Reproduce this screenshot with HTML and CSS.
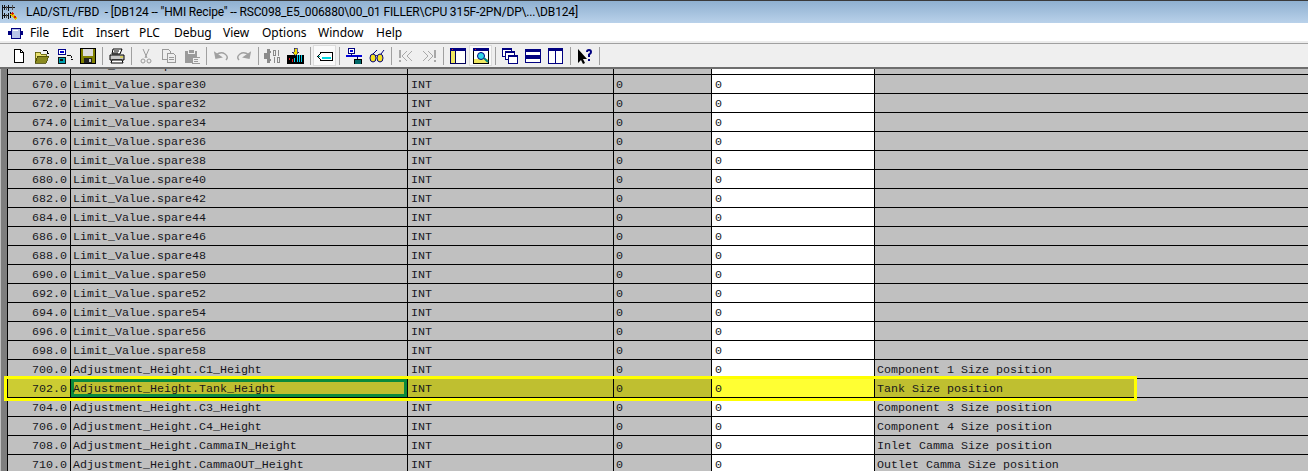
FILE: index.html
```html
<!DOCTYPE html>
<html lang="en">
<head>
<meta charset="utf-8">
<title>LAD/STL/FBD</title>
<link rel="stylesheet" href="styles.css">
</head>
<body>
<div class="app">
  <header class="titlebar">
    <svg class="logo" width="16" height="16" viewBox="0 0 16 16" shape-rendering="crispEdges">
      <path d="M0 1h1v14H0zM6 1h1v6H6zM6 9h1v6H6zM0 3h6v1H0zM0 11h6v1H0zM7 3h6v1H7zM2 1h1v5H2zM2 9h1v5H2zM8 8h1v6H8z" fill="#111"/>
      <path d="M4 2h1v4H4zM4 10h1v4H4zM10 1h1v5h-1z" fill="#555"/>
      <path d="M10 8l5 6-2 2-5-6z" fill="#e8c000"/>
      <path d="M9 9l2-1 1 2-2 1z" fill="#d02010"/>
      <path d="M12 12h2v2h-2z" fill="#d02010"/>
    </svg>
    <span class="title-text">LAD/STL/FBD&nbsp; - [DB124 -- "HMI Recipe" -- RSC098_E5_006880\00_01 FILLER\CPU 315F-2PN/DP\...\DB124]</span>
  </header>
  <nav class="menubar">
    <svg class="doc-icon" width="15" height="12" viewBox="0 0 15 12" shape-rendering="crispEdges">
      <path d="M3 1h9v10H3z" fill="#b8c4e8" stroke="#000080"/>
      <path d="M0 4h3v4H0zM12 4h3v4h-3z" fill="#000080"/>
      <path d="M5 3h5v1H5z" fill="#fff"/>
    </svg>
    <span class="menu-item m-file">File</span>
    <span class="menu-item m-edit">Edit</span>
    <span class="menu-item m-insert">Insert</span>
    <span class="menu-item m-plc">PLC</span>
    <span class="menu-item m-debug">Debug</span>
    <span class="menu-item m-view">View</span>
    <span class="menu-item m-options">Options</span>
    <span class="menu-item m-window">Window</span>
    <span class="menu-item m-help">Help</span>
  </nav>
  <div class="toolbar">
    <span class="tb"><svg viewBox="0 0 16 16" shape-rendering="crispEdges"><path d="M3.500 1.500h6l3 3v10h-9z" fill="#fff" stroke="#000"/><path d="M9.500 1.500v3h3" fill="none" stroke="#000"/></svg></span>
    <span class="tb"><svg viewBox="0 0 16 16" shape-rendering="crispEdges"><path d="M1 4h5l1 2h5v2H4l-3 7z" fill="#e8e070" stroke="#555500" stroke-width=".8"/><path d="M1 15l3-7h11l-3 7z" fill="#8a8a20" stroke="#444400" stroke-width=".8"/><path d="M9 3q2-2 4 0l1 2" fill="none" stroke="#000"/><path d="M12 5h3l-1 1z" fill="#000"/></svg></span>
    <span class="tb"><svg viewBox="0 0 16 16" shape-rendering="crispEdges"><path d="M1 1h7v5H1z" fill="#fff" stroke="#00008a"/><path d="M2.500 2.500h4v2h-4z" fill="#0000d0"/><path d="M1 9h7v6H1z" fill="#00a0b0" stroke="#111"/><path d="M3 11h3v2H3z" fill="#111"/><path d="M10 8l2-1 2 1 1 2M14 11h2l-1 1z" fill="none" stroke="#111"/></svg></span>
    <span class="tb"><svg viewBox="0 0 16 16" shape-rendering="crispEdges"><path d="M1 1h14v14H1z" fill="#808000"/><path d="M3 1h10v7H3z" fill="#dcdcdc"/><path d="M4 10h8v5H4z" fill="#222"/><path d="M9 11h2v3H9z" fill="#c8c8c8"/><path d="M0.500 0.500h15v15h-15z" fill="none" stroke="#000"/></svg></span>
    <span class="sep"></span>
    <span class="tb"><svg viewBox="0 0 16 16"><path d="M4 1l9 0-2 5H3z" fill="#fff" stroke="#000"/><path d="M1 7h14v5H1z" fill="#c8c8c8" stroke="#000"/><path d="M3 12h10l1 3H2z" fill="#fff" stroke="#000"/><path d="M5 3h5M4 5h5" stroke="#000"/><path d="M11 9h3" stroke="#e8d800"/></svg></span>
    <span class="sep"></span>
    <span class="tb"><svg viewBox="0 0 16 16" fill="none" stroke="#9a9a9a"><path d="M5 1l4 9M11 1l-4 9"/><circle cx="5" cy="13" r="2"/><circle cx="11" cy="13" r="2"/></svg></span>
    <span class="tb"><svg viewBox="0 0 16 16" shape-rendering="crispEdges"><path d="M1.500 1.500h6l2 2v8h-8z" fill="#eee" stroke="#9a9a9a"/><path d="M6.500 5.500h6l2 2v7h-8z" fill="#eee" stroke="#9a9a9a"/><path d="M8 9h5M8 11h5" stroke="#9a9a9a"/></svg></span>
    <span class="tb"><svg viewBox="0 0 16 16" shape-rendering="crispEdges"><path d="M1 3h12v12H1z" fill="#9a9a9a"/><path d="M4 1h6v4H4z" fill="#9a9a9a" stroke="#eee"/><path d="M8 9h8v6H8z" fill="#eee" stroke="#9a9a9a"/><path d="M10 11h4M10 13h4" stroke="#9a9a9a"/></svg></span>
    <span class="sep"></span>
    <span class="tb"><svg viewBox="0 0 16 16" fill="none" stroke="#a0a0a0" stroke-width="1.500"><path d="M2 5l1 5 5-1z" fill="#a0a0a0"/><path d="M3 7q5-4 9-1t1 6"/></svg></span>
    <span class="tb"><svg viewBox="0 0 16 16" fill="none" stroke="#a0a0a0" stroke-width="1.500"><path d="M14 5l-1 5-5-1z" fill="#a0a0a0"/><path d="M13 7q-5-4-9-1t-1 6"/></svg></span>
    <span class="sep"></span>
    <span class="tb tb-wide"><svg viewBox="0 0 17 16" shape-rendering="crispEdges"><path d="M3 1h3v14H3z" fill="#8a8a8a"/><path d="M0 5h3v6H0zM6 3h1v2H6zM6 11h1v2H6z" fill="#8a8a8a"/><path d="M9.500 2.500h2v5h-2zM13.500 9.500h2v5h-2z" fill="none" stroke="#8a8a8a"/><path d="M14 2h1v6h-1zM10 9h1v6h-1z" fill="#8a8a8a"/></svg></span>
    <span class="tb tb-wide"><svg viewBox="0 0 17 16" shape-rendering="crispEdges"><path d="M0 7h17v9H0z" fill="#000"/><path d="M10 7h1v7h-1zM12 7h1v7h-1zM14 7h1v7h-1z" fill="#00d0f0"/><path d="M2 10h1v2H2zM5 11h1v3H5z" fill="#e02020"/><path d="M7 10h1v4H7z" fill="#00d0f0"/><path d="M7 0h3v4h2l-3.500 4L5 4h2z" fill="#f0e000" stroke="#000080" stroke-width=".6"/></svg></span>
    <span class="sep"></span>
    <span class="tb pressed"><svg viewBox="0 0 16 16" shape-rendering="crispEdges"><path d="M4 4.500h11v8H4l-3-4z" fill="#fff" stroke="#000"/><path d="M1 8h2" stroke="#00a0a0"/><path d="M5 9h9v2H5z" fill="#00d8e0"/></svg></span>
    <span class="sep"></span>
    <span class="tb"><svg viewBox="0 0 16 16" shape-rendering="crispEdges"><path d="M2 0.500h6v5H2z" fill="#fff" stroke="#000080"/><path d="M3.500 2h3v2h-3z" fill="#0000d8"/><path d="M0 7h16v2H0z" fill="#0000d8"/><path d="M5 5h1v3H5zM11 8h1v3h-1z" fill="#000080"/><path d="M8 11h7v5H8z" fill="#006868" stroke="#000"/></svg></span>
    <span class="tb"><svg viewBox="0 0 16 16" fill="#f4e020" stroke="#000080"><ellipse cx="4" cy="10" rx="3" ry="4"/><ellipse cx="11" cy="10" rx="3" ry="4"/><path d="M7 8q.5-1 1 0M4 6l4-4M12 6l3-4" fill="none"/></svg></span>
    <span class="sep"></span>
    <span class="tb"><svg viewBox="0 0 16 16" fill="none" stroke="#a8a8a8"><path d="M2 2v8M2 12v2" stroke-width="2"/><path d="M9 3L4 8l5 5M14 3L9 8l5 5"/></svg></span>
    <span class="tb"><svg viewBox="0 0 16 16" fill="none" stroke="#a8a8a8"><path d="M14 2v8M14 12v2" stroke-width="2"/><path d="M2 3l5 5-5 5M7 3l5 5-5 5"/></svg></span>
    <span class="sep"></span>
    <span class="tb"><svg viewBox="0 0 16 16" shape-rendering="crispEdges"><path d="M0.500 0.500h15v15h-15z" fill="#fff" stroke="#000058"/><path d="M0 0h16v3H0z" fill="#000080"/><path d="M1 3h4v12H1z" fill="#f0e860"/><path d="M5.500 3v12" stroke="#000058"/><path d="M2 1h1v1H2z" fill="#e02020"/></svg></span>
    <span class="tb pressed"><svg viewBox="0 0 16 16" shape-rendering="crispEdges"><path d="M0.500 0.500h15v15h-15z" fill="#fff" stroke="#000"/><path d="M0 0h16v3H0z" fill="#000080"/><path d="M1 11h14v4H1z" fill="#f0e860"/><path d="M2 1h1v1H2z" fill="#e02020"/><circle cx="8" cy="8" r="3.500" fill="#30d8e8" stroke="#000080" shape-rendering="auto"/><path d="M11 10l4 4" stroke="#008080" stroke-width="2" shape-rendering="auto"/></svg></span>
    <span class="sep"></span>
    <span class="tb"><svg viewBox="0 0 16 16" shape-rendering="crispEdges"><path d="M0.500 0.500h9v8h-9z" fill="#fff" stroke="#000080"/><path d="M0 0h10v2H0z" fill="#000080"/><path d="M3.500 3.500h9v8h-9z" fill="#fff" stroke="#000080"/><path d="M3 3h10v2H3z" fill="#000080"/><path d="M6.500 7.500h9v8h-9z" fill="#fff" stroke="#000080"/><path d="M6 7h10v2H6z" fill="#000080"/></svg></span>
    <span class="tb"><svg viewBox="0 0 16 16" shape-rendering="crispEdges"><path d="M0.500 1.500h15v13h-15z" fill="#fff" stroke="#000080"/><path d="M0 1h16v3H0zM0 7h16v2H0zM0 9h16v2H0z" fill="#000080"/></svg></span>
    <span class="tb"><svg viewBox="0 0 16 16" shape-rendering="crispEdges"><path d="M0.500 0.500h14v15h-14z" fill="#fff" stroke="#000080"/><path d="M0 0h15v3H0z" fill="#000080"/><path d="M7 3h1v13H7z" fill="#000080"/></svg></span>
    <span class="sep"></span>
    <span class="tb"><svg viewBox="0 0 16 16"><path d="M1 1v14l3-3 2 4 2-1-2-4h4z" fill="#000"/><path d="M9 4q0-3 3-3t3 3q0 2-2 3v2h-2V6q2-1 2-2t-1-1-1 1zM11 11h2v2h-2z" fill="#000080"/></svg></span>
    <span class="sep"></span>
  </div>
  <main class="grid">
    <div class="strip"></div>
    <div class="rows">
      <div class="row row-clip"><span class="c num">668.0</span><span class="c name">Limit_Value.spare28</span><span class="c type">INT</span><span class="c init">0</span><span class="c act">0</span><span class="c note"></span></div>
      <div class="row"><span class="c num">670.0</span><span class="c name">Limit_Value.spare30</span><span class="c type">INT</span><span class="c init">0</span><span class="c act">0</span><span class="c note"></span></div>
      <div class="row"><span class="c num">672.0</span><span class="c name">Limit_Value.spare32</span><span class="c type">INT</span><span class="c init">0</span><span class="c act">0</span><span class="c note"></span></div>
      <div class="row"><span class="c num">674.0</span><span class="c name">Limit_Value.spare34</span><span class="c type">INT</span><span class="c init">0</span><span class="c act">0</span><span class="c note"></span></div>
      <div class="row"><span class="c num">676.0</span><span class="c name">Limit_Value.spare36</span><span class="c type">INT</span><span class="c init">0</span><span class="c act">0</span><span class="c note"></span></div>
      <div class="row"><span class="c num">678.0</span><span class="c name">Limit_Value.spare38</span><span class="c type">INT</span><span class="c init">0</span><span class="c act">0</span><span class="c note"></span></div>
      <div class="row"><span class="c num">680.0</span><span class="c name">Limit_Value.spare40</span><span class="c type">INT</span><span class="c init">0</span><span class="c act">0</span><span class="c note"></span></div>
      <div class="row"><span class="c num">682.0</span><span class="c name">Limit_Value.spare42</span><span class="c type">INT</span><span class="c init">0</span><span class="c act">0</span><span class="c note"></span></div>
      <div class="row"><span class="c num">684.0</span><span class="c name">Limit_Value.spare44</span><span class="c type">INT</span><span class="c init">0</span><span class="c act">0</span><span class="c note"></span></div>
      <div class="row"><span class="c num">686.0</span><span class="c name">Limit_Value.spare46</span><span class="c type">INT</span><span class="c init">0</span><span class="c act">0</span><span class="c note"></span></div>
      <div class="row"><span class="c num">688.0</span><span class="c name">Limit_Value.spare48</span><span class="c type">INT</span><span class="c init">0</span><span class="c act">0</span><span class="c note"></span></div>
      <div class="row"><span class="c num">690.0</span><span class="c name">Limit_Value.spare50</span><span class="c type">INT</span><span class="c init">0</span><span class="c act">0</span><span class="c note"></span></div>
      <div class="row"><span class="c num">692.0</span><span class="c name">Limit_Value.spare52</span><span class="c type">INT</span><span class="c init">0</span><span class="c act">0</span><span class="c note"></span></div>
      <div class="row"><span class="c num">694.0</span><span class="c name">Limit_Value.spare54</span><span class="c type">INT</span><span class="c init">0</span><span class="c act">0</span><span class="c note"></span></div>
      <div class="row"><span class="c num">696.0</span><span class="c name">Limit_Value.spare56</span><span class="c type">INT</span><span class="c init">0</span><span class="c act">0</span><span class="c note"></span></div>
      <div class="row"><span class="c num">698.0</span><span class="c name">Limit_Value.spare58</span><span class="c type">INT</span><span class="c init">0</span><span class="c act">0</span><span class="c note"></span></div>
      <div class="row"><span class="c num">700.0</span><span class="c name">Adjustment_Height.C1_Height</span><span class="c type">INT</span><span class="c init">0</span><span class="c act">0</span><span class="c note">Component 1 Size position</span></div>
      <div class="row row-sel"><span class="c num">702.0</span><span class="c name focus">Adjustment_Height.Tank_Height</span><span class="c type">INT</span><span class="c init">0</span><span class="c act">0</span><span class="c note">Tank Size position</span></div>
      <div class="row"><span class="c num">704.0</span><span class="c name">Adjustment_Height.C3_Height</span><span class="c type">INT</span><span class="c init">0</span><span class="c act">0</span><span class="c note">Component 3 Size position</span></div>
      <div class="row"><span class="c num">706.0</span><span class="c name">Adjustment_Height.C4_Height</span><span class="c type">INT</span><span class="c init">0</span><span class="c act">0</span><span class="c note">Component 4 Size position</span></div>
      <div class="row"><span class="c num">708.0</span><span class="c name">Adjustment_Height.CammaIN_Height</span><span class="c type">INT</span><span class="c init">0</span><span class="c act">0</span><span class="c note">Inlet Camma Size position</span></div>
      <div class="row"><span class="c num">710.0</span><span class="c name">Adjustment_Height.CammaOUT_Height</span><span class="c type">INT</span><span class="c init">0</span><span class="c act">0</span><span class="c note">Outlet Camma Size position</span></div>
    </div>
    <div class="highlight"></div>
  </main>
</div>
</body>
</html>
```
FILE: styles.css
```css
* { box-sizing: border-box; }
html, body { margin: 0; padding: 0; height: 100%; overflow: hidden; }
.app { width: 1308px; height: 471px; display: flex; flex-direction: column; overflow: hidden; background: #c0c0c0; font-family: "Noto Sans", sans-serif; }

.titlebar { height: 23px; flex: none; display: flex; align-items: center; gap: 8px; padding-left: 2px; border-top: 1px solid #3a3a3a; background: linear-gradient(#8fb0d0, #b9d1ea); color: #000; font-family: "Roboto", sans-serif; font-size: 12px; letter-spacing: -0.16px; white-space: nowrap; }
.logo { flex: none; }
.title-text { line-height: 23px; }

.menubar { height: 18px; flex: none; display: flex; align-items: center; padding: 1px 0 0 8px; background: #fff; font-size: 12px; color: #000; }
.doc-icon { flex: none; margin-right: 7px; }
.menu-item { line-height: 17px; }
.m-file { width: 32px; }
.m-edit { width: 34px; }
.m-insert { width: 43px; }
.m-plc { width: 35px; }
.m-debug { width: 49px; }
.m-view { width: 39px; }
.m-options { width: 56px; }
.m-window { width: 58px; }

.toolbar { height: 28px; flex: none; display: flex; align-items: center; padding: 3px 0 0 7px; background: linear-gradient(#ececec 2px, #a0a0a0 2px, #a0a0a0 3px, #efefef 3px); border-bottom: 2px solid #6e6e6e; }
.tb { width: 23px; height: 21px; flex: none; display: flex; align-items: center; justify-content: center; }
.tb svg { width: 16px; height: 16px; display: block; }
.tb-wide svg { width: 17px; }
.pressed { background: #fafafa; border: 1px solid #dcdcdc; }
.sep { width: 6px; height: 18px; flex: none; display: flex; justify-content: center; }
.sep::before { content: ""; width: 1px; height: 100%; background: #a0a0a0; }

.grid { flex: 1; min-height: 0; display: flex; position: relative; overflow: hidden; background: #c0c0c0; }
.strip { width: 7px; flex: none; background: linear-gradient(90deg, #c0c0c0 1px, #7e7e7e 1px); }
.rows { flex: 1; min-width: 0; display: flex; flex-direction: column; }

.row { height: 19px; flex: none; display: flex; border-bottom: 1px solid #000; font-family: "Liberation Mono", monospace; font-size: 11.67px; line-height: 20px; color: #16161c; white-space: pre; }
.row-clip { height: 6px; }
.c { height: 100%; flex: none; border-right: 1px solid #000; overflow: hidden; }
.row-clip .c { line-height: 16px; display: flex; align-items: flex-end; }
.num { width: 64px; padding-right: 3px; text-align: right; border-left: 1px solid #000; justify-content: flex-end; }
.name { width: 337px; padding-left: 2px; }
.type { width: 206px; padding-left: 3px; }
.init { width: 98px; padding-left: 2px; }
.act { width: 163px; padding-left: 3px; background: #fff; }
.note { flex: 1; padding-left: 2px; border-right: 0; }

.row-sel .c { background: #bfbf30; }
.row-sel .num { background: #cccc33; }
.row-sel .act { background: #ffff33; }
.row-sel .note { background: linear-gradient(#bfbf30, #bfbf30) no-repeat; background-size: 260px 100%; }
.row-sel .focus { box-shadow: inset 0 0 0 3px #0a8a3c; }

.highlight { position: absolute; left: 4px; top: 307px; width: 1133px; height: 25px; border: 3px solid #ffff00; pointer-events: none; }
```
